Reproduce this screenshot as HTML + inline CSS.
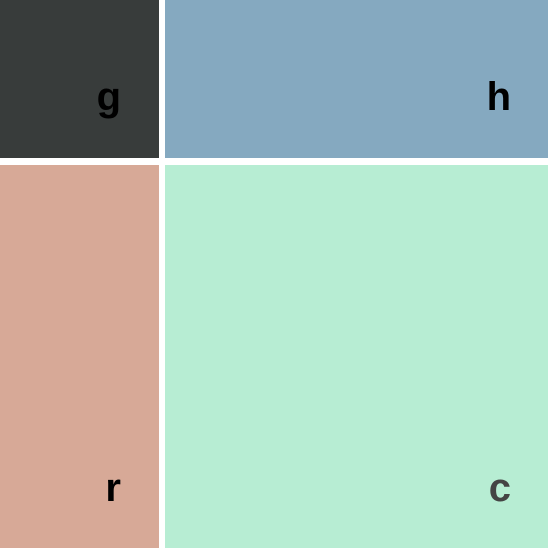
<!DOCTYPE html>
<html><head><style>
html,body{margin:0;padding:0;background:#fff;width:548px;height:548px;overflow:hidden}
.p{position:absolute}
.t{position:absolute;font-family:"Liberation Sans",sans-serif;font-weight:bold;font-size:40px;line-height:1;text-align:right}
</style></head><body>
<div class="p" style="left:0;top:0;width:159px;height:158px;background:#383c3b"></div>
<div class="p" style="left:165px;top:0;width:383px;height:158px;background:#85a9c0"></div>
<div class="p" style="left:0;top:165px;width:159px;height:383px;background:#d7a997"></div>
<div class="p" style="left:165px;top:165px;width:383px;height:383px;background:#b7edd3"></div>
<div class="t" style="right:427px;top:77px;color:#000">g</div>
<div class="t" style="right:37px;top:77px;color:#000">h</div>
<div class="t" style="right:427px;top:468px;color:#000">r</div>
<div class="t" style="right:37px;top:468px;color:#444">c</div>
</body></html>
